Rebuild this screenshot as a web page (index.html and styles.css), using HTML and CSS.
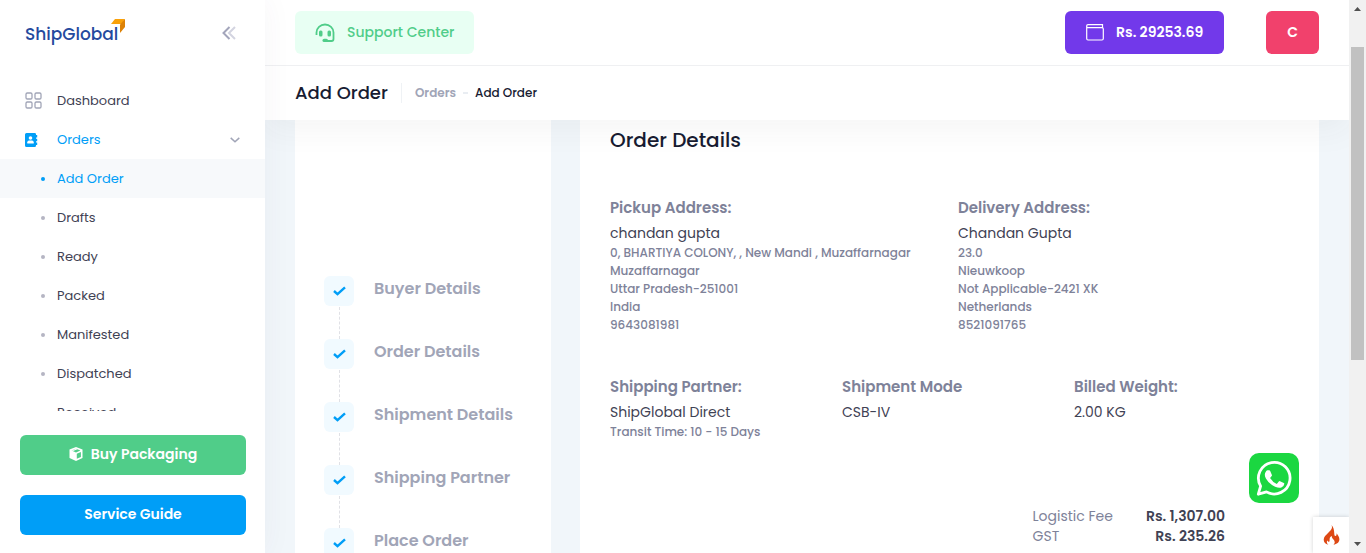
FILE: index.html
```html
<!DOCTYPE html>
<html lang="en">
<head>
<meta charset="utf-8">
<meta name="viewport" content="width=device-width, initial-scale=1">
<title>ShipGlobal - Add Order</title>
<link rel="stylesheet" href="styles.css">
</head>
<body>
<div class="app">
  <aside class="sidebar">
    <div class="brand">
      <a class="logo" href="#"><span class="logo-text">ShipGlobal</span><svg class="logo-mark" width="14" height="14" viewBox="0 0 14 14"><path fill="#f9a10a" d="M4 0h10L10.500 5H0z"/><path fill="#dd8206" d="M14 0v8L9 14V5.500z"/></svg></a>
      <button class="collapse" aria-label="Collapse menu"><svg width="14" height="14" viewBox="0 0 14 14" fill="none" stroke-width="2"><path stroke="#a3a5bb" d="M7.500 1L1.500 7l6 6"/><path stroke="#d3d4e0" d="M13 1L7 7l6 6"/></svg></button>
    </div>
    <nav class="nav">
      <a class="nav-item" href="#"><svg class="nav-icon" width="17" height="17" viewBox="0 0 17 17" fill="none" stroke="#a1a5b7" stroke-width="1.300"><rect x="1" y="1" width="6" height="6" rx="1.300"/><rect x="10" y="1" width="6" height="6" rx="1.300"/><rect x="1" y="10" width="6" height="6" rx="1.300"/><rect x="10" y="10" width="6" height="6" rx="1.300"/></svg><span>Dashboard</span></a>
      <a class="nav-item open" href="#"><svg class="nav-icon" width="17" height="14" viewBox="0 0 17 14"><path fill="#009ef7" d="M1.500 0h8.200Q11 0 11 1.300v11.200Q11 14 9.700 14H1.500Q0 14 0 12.500v-11Q0 0 1.500 0zM11 2h1.200v2.600H11zM11 5.700h1.200v2.600H11zM11 9.400h1.200V12H11z"/><circle cx="5.500" cy="5" r="1.800" fill="#fff"/><path fill="#fff" d="M2.300 10.500V9.200Q2.300 7.500 4 7.500h3q1.700 0 1.700 1.700v1.300z"/></svg><span>Orders</span><svg class="chevron" width="10" height="6" viewBox="0 0 10 6" fill="none" stroke="#a1a5b7" stroke-width="1.500"><path d="M.7.900L5 4.700 9.300.900"/></svg></a>
      <a class="nav-item sub active" href="#"><i class="dot"></i><span>Add Order</span></a>
      <a class="nav-item sub" href="#"><i class="dot"></i><span>Drafts</span></a>
      <a class="nav-item sub" href="#"><i class="dot"></i><span>Ready</span></a>
      <a class="nav-item sub" href="#"><i class="dot"></i><span>Packed</span></a>
      <a class="nav-item sub" href="#"><i class="dot"></i><span>Manifested</span></a>
      <a class="nav-item sub" href="#"><i class="dot"></i><span>Dispatched</span></a>
      <a class="nav-item sub" href="#"><i class="dot"></i><span>Received</span></a>
    </nav>
    <div class="side-actions">
      <button class="btn-side green"><svg width="14" height="14" viewBox="0 0 14 14"><path fill="#fff" d="M7 0l6.500 2.600v8.500L7 14 .500 11.100V2.600z"/><path fill="#50cd89" d="M7 1.700L2.600 3.500 7 5.400l4.400-1.900zM7.800 6.800v5l4.100-1.800V5z"/><path fill="#fff" d="M7 1.700L2.600 3.500 4 4.100 8.500 2.300z"/></svg><span>Buy Packaging</span></button>
      <button class="btn-side blue"><span>Service Guide</span></button>
    </div>
  </aside>

  <div class="main">
    <header class="header">
      <div class="topbar">
        <button class="btn-top support"><svg width="20" height="20" viewBox="0 0 20 20"><path fill="none" stroke="#50cd89" stroke-width="1.800" d="M1.500 12V9.500a8.500 8 0 0 1 17 0V16q0 2-2 2H10"/><rect x="4" y="7.500" width="3.500" height="6" rx="1.500" fill="#50cd89"/><rect x="12.500" y="7.500" width="3.500" height="6" rx="1.500" fill="#50cd89"/><rect x="7.500" y="15.800" width="5.500" height="3.200" rx="1.600" fill="#50cd89"/></svg><span>Support Center</span></button>
        <div class="top-right">
          <button class="btn-top wallet"><svg width="18" height="17" viewBox="0 0 18 17" fill="none" stroke="#fff" stroke-width="1.200"><path d="M16.500 3.500V.700H2Q.700.700.700 2v12.500Q.700 16 2 16h14q1.300 0 1.300-1.500V5q0-1.300-1.300-1.300H2Q.700 3.700.700 2"/></svg><span>Rs. 29253.69</span></button>
          <button class="btn-top avatar">C</button>
        </div>
      </div>
      <div class="titlebar">
        <h1 class="page-title">Add Order</h1>
        <div class="crumbs"><a class="crumb" href="#">Orders</a><i class="crumb-dash"></i><span>Add Order</span></div>
      </div>
    </header>

    <main class="content">
      <section class="card steps">
        <ol class="step-list">
          <li class="step"><span class="step-box"><svg width="13" height="10" viewBox="0 0 13 10"><path class="tick" d="M1 5l3.500 3.200L12 1.300"/></svg></span><span class="step-label">Buyer Details</span></li>
          <li class="step"><span class="step-box"><svg width="13" height="10" viewBox="0 0 13 10"><path class="tick" d="M1 5l3.500 3.200L12 1.300"/></svg></span><span class="step-label">Order Details</span></li>
          <li class="step"><span class="step-box"><svg width="13" height="10" viewBox="0 0 13 10"><path class="tick" d="M1 5l3.500 3.200L12 1.300"/></svg></span><span class="step-label">Shipment Details</span></li>
          <li class="step"><span class="step-box"><svg width="13" height="10" viewBox="0 0 13 10"><path class="tick" d="M1 5l3.500 3.200L12 1.300"/></svg></span><span class="step-label">Shipping Partner</span></li>
          <li class="step"><span class="step-box"><svg width="13" height="10" viewBox="0 0 13 10"><path class="tick" d="M1 5l3.500 3.200L12 1.300"/></svg></span><span class="step-label">Place Order</span></li>
        </ol>
      </section>

      <section class="card details">
        <h2 class="card-title">Order Details</h2>
        <div class="two-col">
          <div>
            <h3 class="field-title">Pickup Address:</h3>
            <div class="field-value">chandan gupta</div>
            <div class="field-note">0, BHARTIYA COLONY, , New Mandi , Muzaffarnagar<br>Muzaffarnagar<br>Uttar Pradesh-251001<br>India<br>9643081981</div>
          </div>
          <div>
            <h3 class="field-title">Delivery Address:</h3>
            <div class="field-value">Chandan Gupta</div>
            <div class="field-note">23.0<br>Nieuwkoop<br>Not Applicable-2421 XK<br>Netherlands<br>8521091765</div>
          </div>
        </div>
        <div class="three-col">
          <div>
            <h3 class="field-title">Shipping Partner:</h3>
            <div class="field-value">ShipGlobal Direct</div>
            <div class="field-note">Transit Time: 10 - 15 Days</div>
          </div>
          <div>
            <h3 class="field-title">Shipment Mode</h3>
            <div class="field-value">CSB-IV</div>
          </div>
          <div>
            <h3 class="field-title">Billed Weight:</h3>
            <div class="field-value">2.00 KG</div>
          </div>
        </div>
        <table class="totals">
          <tr><th scope="row">Logistic Fee</th><td>Rs. 1,307.00</td></tr>
          <tr><th scope="row">GST</th><td>Rs. 235.26</td></tr>
        </table>
      </section>
    </main>

    <a class="whatsapp" href="#" aria-label="WhatsApp"><svg width="50" height="50" viewBox="0 0 50 50"><rect width="50" height="50" rx="10" fill="#1bd741"/><path fill="none" stroke="#fff" stroke-width="2.800" stroke-linejoin="round" d="M9.300 41.200l2.300-8.100A15.800 15.800 0 1 1 17.500 38.900z"/><path fill="#fff" d="M18.500 17.200h1.700q.700 0 1 .700l1.700 4q.200.600-.2 1.200l-1.600 2q2.600 4.300 6.700 5.800l2-2.400q.500-.600 1.200-.300l3.800 1.900q.600.300.500 1-.3 2.500-3 3.500-2.500.800-6.200-.900-6-2.500-9.200-8.200-2.300-4.200.2-7.300.600-.900 1.400-1z"/></svg></a>
    <a class="flame" href="#" aria-label="Debug toolbar"><svg width="17" height="20" viewBox="0 0 17 20"><path fill="#dd4814" d="M8.500 0c1.400 3.300-.300 4.700-3 7.600C2.800 10.400.700 12 .700 14.700c0 2.500 1.800 4.400 4.600 5-1.500-1.300-1.900-3-1-4.500.3 1 1 1.600 1.700 1.500 1.200-.400.2-2.200.8-3.700.4-1.100 1.200-1.700 2-2-.3 2.600 3 3.700 2.900 6.300 0 1-.5 1.800-1.300 2.400 3.500-.500 6-2.400 6-5.400 0-2.700-1.700-4.300-2.900-6 .3 1.600-.1 2.600-1.100 2.700C10.300 11 12.600 4.500 8.500 0z"/></svg></a>
  </div>

  <div class="scrollbar" aria-hidden="true">
    <svg width="17" height="17" viewBox="0 0 17 17"><path fill="#505050" d="M5 11h7L8.500 7z"/></svg>
    <div class="track"><div class="thumb"></div></div>
    <svg width="17" height="17" viewBox="0 0 17 17"><path fill="#505050" d="M5 6h7l-3.500 4z"/></svg>
  </div>
</div>
</body>
</html>
```
FILE: styles.css
```css
* { box-sizing: border-box; }

body {
  margin: 0;
  font-family: Poppins, Inter, "Liberation Sans", sans-serif;
  font-size: 14px;
  color: #3f4254;
  background: #f1f6fa;
}

a { color: inherit; text-decoration: none; }
button { font: inherit; border: 0; padding: 0; cursor: pointer; }
h1, h2, h3 { margin: 0; }
svg { display: block; flex: none; }

.app { display: flex; height: 100vh; overflow: hidden; }

/* Sidebar */
.sidebar {
  position: relative;
  z-index: 2;
  flex: none;
  width: 265px;
  display: flex;
  flex-direction: column;
  background: #fff;
  box-shadow: 0 0 28px rgba(82, 63, 105, 0.05);
}
.brand {
  display: flex;
  align-items: center;
  justify-content: space-between;
  height: 65px;
  padding: 0 29px 0 25px;
  flex: none;
}
.logo { display: flex; align-items: flex-start; }
.logo-text {
  padding-top: 3px;
  font-size: 17px;
  font-weight: 500;
  line-height: 24px;
  color: #254a9e;
}
.logo-mark { margin-left: -7px; }
.collapse { background: none; }
.nav {
  flex: 1;
  min-height: 0;
  overflow: hidden;
  margin-top: 16px;
  font-size: 13px;
}
.nav-item {
  display: flex;
  align-items: center;
  height: 39px;
  padding: 0 25px;
}
.nav-icon { margin-right: 15px; }
.nav-item.open, .nav-item.active { color: #009ef7; }
.chevron { margin-left: auto; }
.nav-item.sub { padding-left: 41px; }
.nav-item.active { background: #f7f9fb; }
.dot {
  width: 4px;
  height: 4px;
  margin-right: 12px;
  border-radius: 50%;
  background: #b5b5c3;
}
.active .dot { background: #009ef7; }
.side-actions {
  display: flex;
  flex-direction: column;
  gap: 20px;
  padding: 24px 19px 18px 20px;
}
.btn-side {
  display: flex;
  align-items: center;
  justify-content: center;
  gap: 8px;
  height: 40px;
  padding-bottom: 2px;
  border-radius: 6px;
  font-weight: 600;
  color: #fff;
}
.green { background: #50cd89; }
.blue { background: #009ef7; }

/* Main column */
.main {
  flex: 1;
  min-width: 0;
  position: relative;
  display: flex;
  flex-direction: column;
}
.header {
  position: relative;
  z-index: 1;
  flex: none;
  background: #fff;
  box-shadow: 0 10px 30px rgba(50, 50, 60, 0.05);
}
.topbar {
  display: flex;
  align-items: center;
  justify-content: space-between;
  height: 66px;
  padding: 0 30px;
  border-bottom: 1px solid #eff0f2;
}
.top-right { display: flex; gap: 42px; }
.btn-top {
  display: flex;
  align-items: center;
  gap: 12px;
  height: 43px;
  padding: 0 21px;
  border-radius: 6px;
  font-weight: 600;
  color: #fff;
}
.support {
  padding: 0 20px;
  background: #e8fff3;
  color: #50cd89;
  font-weight: 500;
}
.wallet { background: #7239ea; }
.avatar { background: #f1416c; }
.titlebar {
  display: flex;
  align-items: center;
  height: 54px;
  padding: 0 30px;
}
.page-title {
  font-size: 18px;
  line-height: 20px;
  font-weight: 500;
  color: #181c32;
}
.crumbs {
  display: flex;
  align-items: center;
  margin-left: 13px;
  padding-left: 13px;
  height: 20px;
  border-left: 1px solid #eff2f5;
  font-size: 12px;
  font-weight: 500;
  color: #181c32;
}
.crumb { color: #a1a5b7; font-weight: 600; }
.crumb-dash { width: 5px; height: 2px; margin: 0 7px; background: #e9edf2; }

.content {
  flex: 1;
  min-height: 0;
  display: flex;
  gap: 29px;
  padding: 0 30px;
}
.card { background: #fff; }

/* Stepper */
.steps { flex: none; width: 256px; padding: 156px 29px 0; overflow: hidden; }
.step-list { margin: 0; padding: 0; list-style: none; }
.step {
  position: relative;
  display: flex;
  align-items: flex-start;
  gap: 20px;
  height: 63px;
}
.step:not(:last-child)::after {
  content: "";
  position: absolute;
  left: 15px;
  top: 31px;
  bottom: 0;
  border-left: 1px dashed #e0e1e6;
}
.step-box {
  display: flex;
  align-items: center;
  justify-content: center;
  width: 30px;
  height: 30px;
  border-radius: 6px;
  background: #f1faff;
}
.tick { fill: none; stroke: #009ef7; stroke-width: 2.4; }
.step-label {
  font-size: 16px;
  font-weight: 600;
  line-height: 26px;
  color: #a1a5b7;
  white-space: nowrap;
}

/* Order details */
.details { flex: 1; min-width: 0; padding: 5px 13px 0 30px; overflow: hidden; }
.card-title {
  font-size: 20px;
  line-height: 30px;
  font-weight: 500;
  color: #181c32;
}
.two-col, .three-col { display: grid; }
.two-col { grid-template-columns: repeat(2, 1fr); margin-top: 42px; }
.three-col { grid-template-columns: repeat(3, 1fr); margin-top: 42px; }
.field-title {
  font-size: 15px;
  line-height: 22px;
  font-weight: 600;
  color: #7e8299;
}
.field-value {
  margin-top: 3px;
  font-size: 14px;
  line-height: 22px;
  color: #3f4254;
}
.field-note {
  font-size: 12px;
  font-weight: 500;
  line-height: 18px;
  color: #7e8299;
}
.totals {
  margin: 65px 81px 0 auto;
  border-collapse: collapse;
  font-size: 14px;
  line-height: 20px;
}
.totals th {
  padding: 0 33px 0 0;
  font-weight: 400;
  text-align: left;
  color: #7e8299;
}
.totals td { padding: 0; font-weight: 600; text-align: right; }

/* Floating widgets */
.whatsapp { position: absolute; right: 50px; bottom: 50px; z-index: 2; }
.flame {
  position: absolute;
  right: 0;
  bottom: 0;
  z-index: 2;
  display: flex;
  align-items: center;
  justify-content: center;
  width: 36px;
  height: 36px;
  background: #fff;
  box-shadow: 0 0 4px rgba(0, 0, 0, 0.18);
}

/* Scrollbar */
.scrollbar {
  flex: none;
  width: 17px;
  display: flex;
  flex-direction: column;
  background: #f1f1f1;
  position: relative;
  z-index: 3;
}
.track { flex: 1; padding: 30px 2px 0; }
.thumb { height: 64%; min-height: 313px; background: #c1c1c1; }
```
